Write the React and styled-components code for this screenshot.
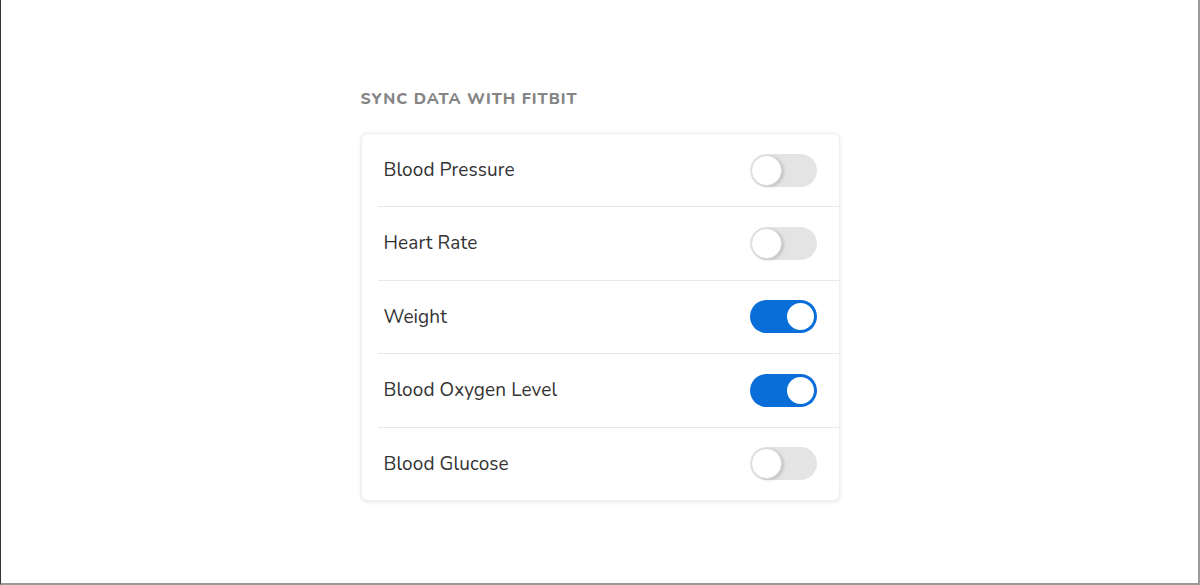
import React, { useState } from "react";
import styled, { createGlobalStyle } from "styled-components";

const Global = createGlobalStyle`
  html, body { margin: 0; padding: 0; background: #fff; }
  * { box-sizing: border-box; }
`;

const Frame = styled.div`
  width: 1200px;
  height: 585px;
  border-left: 1px solid #333;
  border-right: 2px solid #9a9a9a;
  border-bottom: 2px solid #9a9a9a;
  display: flex;
  justify-content: center;
  padding-top: 89px;
  font-family: "Nunito", Lato, "Noto Sans", sans-serif;
`;

const Section = styled.div`
  width: 479px;
  margin-left: 1px;
`;

const Heading = styled.h2`
  margin: 0 0 23px 0;
  font-size: 16px;
  line-height: 21px;
  font-weight: 800;
  letter-spacing: 1px;
  color: #858585;
  text-transform: uppercase;
`;

const Card = styled.div`
  background: #fff;
  border: 1px solid #efefef;
  border-radius: 6px;
  box-shadow: 0 1px 4px rgba(0, 0, 0, 0.1);
  padding-left: 16px;
`;

const Row = styled.div`
  display: flex;
  align-items: center;
  justify-content: space-between;
  padding: 0 22px 0 6px;
  border-top: ${(p) => (p.$first ? "none" : "1px solid #e8e8e8")};
  height: ${(p) => (p.$first ? "72px" : "73.5px")};
`;

const Label = styled.span`
  font-size: 19px;
  color: #333;
  letter-spacing: 0.1px;
`;

const Track = styled.button`
  position: relative;
  width: 67px;
  height: 33px;
  border-radius: 17px;
  border: none;
  padding: 0;
  cursor: pointer;
  background: ${(p) => (p.$on ? "#0a6ed9" : "#e4e4e4")};
`;

const Knob = styled.span`
  position: absolute;
  top: 1px;
  left: ${(p) => (p.$on ? "35px" : "1px")};
  width: 31px;
  height: 31px;
  border-radius: 50%;
  background: #fff;
  border: ${(p) => (p.$on ? "2px solid #0a6ed9" : "1px solid #dcdcdc")};
  box-shadow: ${(p) => (p.$on ? "none" : "2px 1px 3px rgba(0,0,0,0.15)")};
`;

const items = [
  ["Blood Pressure", false],
  ["Heart Rate", false],
  ["Weight", true],
  ["Blood Oxygen Level", true],
  ["Blood Glucose", false],
];

function Toggle({ initial }) {
  const [on, setOn] = useState(initial);
  return (
    <Track $on={on} onClick={() => setOn(!on)} aria-pressed={on}>
      <Knob $on={on} />
    </Track>
  );
}

export default function App() {
  return (
    <>
      <Global />
      <Frame>
        <Section>
          <Heading>Sync data with Fitbit</Heading>
          <Card>
            {items.map(([label, on], i) => (
              <Row key={label} $first={i === 0}>
                <Label>{label}</Label>
                <Toggle initial={on} />
              </Row>
            ))}
          </Card>
        </Section>
      </Frame>
    </>
  );
}
